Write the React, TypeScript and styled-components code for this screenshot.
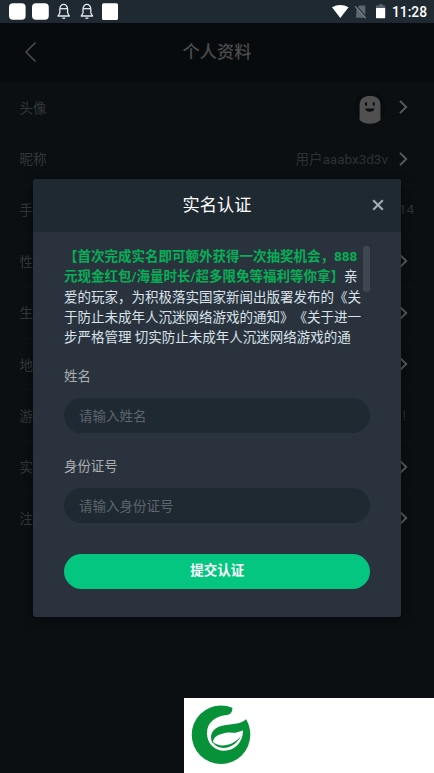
import React from "react";
import styled, { createGlobalStyle } from "styled-components";

const Global = createGlobalStyle`
  * { box-sizing: border-box; }
  body { margin: 0; background: #0b0f12; font-family: Roboto, "Noto Sans CJK SC", sans-serif; text-spacing-trim: space-all; }
  button, input { font-family: inherit; }
`;

const Screen = styled.div`
  position: relative;
  width: 434px;
  height: 773px;
  overflow: hidden;
  background: #0b0f12;
`;

const StatusBar = styled.div`
  height: 23px;
  background: #1f2931;
  display: flex;
  justify-content: space-between;
`;

const StatusIcons = styled.svg`
  display: block;
`;

const StatusRight = styled.div`
  display: flex;
  width: 102px;
`;

const Clock = styled.span`
  color: #fff;
  font-size: 13.8px;
  font-weight: 500;
  line-height: 25px;
  white-space: nowrap;
`;

const NavBar = styled.header`
  display: grid;
  grid-template-columns: 60px 1fr 60px;
  height: 59px;
  align-items: center;
  padding-bottom: 1px;
  background: #070b0d;
`;

const Back = styled.svg`
  margin-left: 24px;
`;

const NavTitle = styled.h1`
  margin: 0;
  padding-bottom: 1px;
  text-align: center;
  font-size: 17.2px;
  line-height: 24px;
  font-weight: 500;
  color: #4c4c4c;
`;

const List = styled.div`
  padding: 0 20px 0 19.5px;
`;

const Row = styled.div`
  height: 51.4px;
  display: flex;
  align-items: center;
  justify-content: space-between;
  border-bottom: 1px solid #0e1215;
  font-size: 13.5px;
  color: #33373a;
  &:last-child { border-bottom-color: transparent; }
`;

const RowLabel = styled.span`
  padding-bottom: 1px;
`;

const RowEnd = styled.div`
  display: flex;
  align-items: center;
`;

const Value = styled.span<{ $gap: number }>`
  margin-right: ${(p) => p.$gap}px;
  padding-bottom: 1px;
  color: #2d3134;
`;

const Arrow = styled.svg`
  margin-right: 6px;
`;

const AvatarIcon = styled.svg`
  margin-right: 11px;
`;

const Dialog = styled.section`
  position: absolute;
  left: 33px;
  top: 179px;
  width: 368px;
  height: 438px;
  border-radius: 3px;
  overflow: hidden;
  background: #2a333d;
  box-shadow: 0 2px 10px rgba(0, 0, 0, 0.45);
`;

const DialogHeader = styled.div`
  height: 53px;
  padding: 0 15px;
  display: grid;
  grid-template-columns: 16px 1fr 16px;
  align-items: center;
  background: #1f2931;
`;

const DialogTitle = styled.h2`
  grid-column: 2;
  margin: 0;
  padding-bottom: 1px;
  text-align: center;
  font-size: 17.2px;
  font-weight: 400;
  line-height: 24px;
  color: #fff;
`;

const CloseIcon = styled.svg`
  margin-bottom: 2px;
`;

const DialogBody = styled.div`
  padding: 14px 31px 0;
`;

const Notice = styled.div`
  display: flex;
  justify-content: space-between;
  height: 102px;
  color: #d9e2ea;
`;

const NoticeText = styled.div`
  font-size: 13.5px;
  line-height: 20.3px;
`;

const Line = styled.div`
  white-space: nowrap;
`;

const Highlight = styled.strong`
  font-weight: 700;
  color: #06ae56;
`;

const ScrollThumb = styled.div`
  width: 7px;
  height: 46px;
  border-radius: 3px;
  background: #3f4851;
`;

const Fields = styled.div`
  padding-top: 17px;
`;

const Field = styled.label`
  display: block;
  height: 90px;
`;

const FieldLabel = styled.span`
  display: block;
  height: 22px;
  margin-bottom: 11px;
  font-size: 13.4px;
  line-height: 24px;
  color: #aaaeb1;
`;

const Input = styled.input`
  display: block;
  width: 306px;
  height: 35px;
  padding: 1px 15px 0;
  border: 0;
  border-radius: 18px;
  outline: 0;
  background: #1f2931;
  font-size: 13.5px;
  &::placeholder { color: #5d656c; opacity: 1; }
`;

const Submit = styled.button`
  display: block;
  width: 306.4px;
  height: 35px;
  margin-top: 8.7px;
  padding: 0 0 4px;
  border: 0;
  border-radius: 18px;
  background: #05c680;
  color: #fff;
  font-size: 13.5px;
  font-weight: 700;
`;

const Watermark = styled.div`
  position: absolute;
  right: 0;
  bottom: 0;
  width: 250px;
  height: 75px;
  background: #fff;
`;

const Chevron = () => (
  <Arrow width="9" height="14" viewBox="0 0 9 14" fill="none" stroke="#5b5b5b" strokeWidth="1.9">
    <path d="M1 .8L7.2 7L1 13.2" />
  </Arrow>
);

const Avatar = () => (
  <AvatarIcon width="36" height="36" viewBox="0 0 36 36">
    <circle cx="18" cy="18" r="17" fill="#090d10" stroke="#0f1315" />
    <path d="M7.6 31.3V16.5C7.6 9.5 11.5 7 18 7s10.4 2.5 10.4 9.5V31.3A17 17 0 0 1 7.6 31.3Z" fill="#505050" />
    <ellipse cx="14" cy="15" rx="1.1" ry="2" fill="#0b0e10" />
    <ellipse cx="21.8" cy="15" rx="1.1" ry="2" fill="#0b0e10" />
    <path d="M13.2 19.4h9.3c-.5 4.4-8.8 4.4-9.3 0Z" fill="#0b0e10" />
  </AvatarIcon>
);

const Bell = ({ x }: { x: number }) => (
  <g transform={`translate(${x} 4)`} fill="none" stroke="#e8edf0" strokeWidth="1.3" strokeLinejoin="round">
    <path d="M2.6 9V5.3C2.6-1.2 10.4-1.2 10.4 5.3V9L12.2 12H.8Z" />
    <path d="M3 4.7h7" />
    <path d="M5 14.2h3" />
  </g>
);

const rows: { label: string; value?: string; avatar?: boolean; arrow: boolean; gap: number }[] = [
  { label: "头像", avatar: true, arrow: true, gap: 0 },
  { label: "昵称", value: "用户aaabx3d3v", arrow: true, gap: 11 },
  { label: "手机", value: "14", arrow: false, gap: 0 },
  { label: "性别", arrow: true, gap: 0 },
  { label: "生日", arrow: true, gap: 0 },
  { label: "地区", arrow: true, gap: 0 },
  { label: "游戏", value: "!", arrow: false, gap: 8 },
  { label: "实名", arrow: true, gap: 0 },
  { label: "注销", arrow: true, gap: 0 },
];

export default function App() {
  return (
    <Screen>
      <Global />
      <StatusBar>
        <StatusIcons width="124" height="23">
          <rect x="9" y="3.2" width="16.6" height="16.6" rx="4" fill="#fff" />
          <rect x="32" y="3.2" width="16.8" height="16.6" rx="4" fill="#fff" />
          <Bell x={57.2} />
          <Bell x={80.4} />
          <rect x="102" y="3.3" width="16" height="16.6" rx="1.5" fill="#fff" />
        </StatusIcons>
        <StatusRight>
          <StatusIcons width="60" height="23">
            <path d="M0 7.2Q8.2 2.6 16.6 7.2L8.3 18Z" fill="#fff" />
            <path d="M24.5 8L27.5 5.4H33.3V17.8H24Z" fill="#5e676d" />
            <path d="M23.8 5.6L34.5 17.2" stroke="#1f2931" strokeWidth="1.2" />
            <path d="M23 6.2L33.8 18.2" stroke="#7a8187" strokeWidth="1.1" />
            <path d="M47 4.3h4v1.2h2.2V9H44V5.5h3Z" fill="#59626a" />
            <rect x="44" y="8" width="9.2" height="10.2" rx=".6" fill="#fff" />
          </StatusIcons>
          <Clock>11:28</Clock>
        </StatusRight>
      </StatusBar>
      <NavBar>
        <Back width="13" height="20" viewBox="0 0 13 20" fill="none" stroke="#4c4c4c" strokeWidth="1.5">
          <path d="M11.5.5L2 10L11.5 19.5" />
        </Back>
        <NavTitle>个人资料</NavTitle>
      </NavBar>
      <List>
        {rows.map((r) => (
          <Row key={r.label}>
            <RowLabel>{r.label}</RowLabel>
            <RowEnd>
              {r.avatar && <Avatar />}
              {r.value && <Value $gap={r.gap}>{r.value}</Value>}
              {r.arrow && <Chevron />}
            </RowEnd>
          </Row>
        ))}
      </List>
      <Dialog>
        <DialogHeader>
          <DialogTitle>实名认证</DialogTitle>
          <CloseIcon width="16" height="16" viewBox="0 0 16 16" stroke="#a3acb4" strokeWidth="2.1">
            <path d="M3.2 3.2L12.8 12.8M12.8 3.2L3.2 12.8" />
          </CloseIcon>
        </DialogHeader>
        <DialogBody>
          <Notice>
            <NoticeText>
              <Line><Highlight>【首次完成实名即可额外获得一次抽奖机会，888</Highlight></Line>
              <Line><Highlight>元现金红包/海量时长/超多限免等福利等你拿】</Highlight>亲</Line>
              <Line>爱的玩家，为积极落实国家新闻出版署发布的《关</Line>
              <Line>于防止未成年人沉迷网络游戏的通知》《关于进一</Line>
              <Line>步严格管理 切实防止未成年人沉迷网络游戏的通</Line>
            </NoticeText>
            <ScrollThumb />
          </Notice>
          <Fields>
            <Field>
              <FieldLabel>姓名</FieldLabel>
              <Input placeholder="请输入姓名" />
            </Field>
            <Field>
              <FieldLabel>身份证号</FieldLabel>
              <Input placeholder="请输入身份证号" />
            </Field>
            <Submit>提交认证</Submit>
          </Fields>
        </DialogBody>
      </Dialog>
      <Watermark>
        <svg width="75" height="75" viewBox="0 0 75 75">
          <path d="M48.3 10C44 8 41 7.4 37 7.4A29.3 29.3 0 1 0 66.3 36.7C66.3 31 64.8 25.5 62 21.3L52 34L40 17.3C43.5 17 47 17 48.3 10Z" fill="#079239" />
          <path d="M42 17C31 18.5 23 24.5 23 35C23 46 31 52.7 40 52.7C51 52.7 59 44 59 32.5L62 21.3L50 10Z" fill="#fff" />
          <path d="M48.3 10C48.6 15 45.5 17.3 40.5 17.3L36 14L40 8Z" fill="#079239" />
          <path d="M62 21.3C57 27 46 25.5 37 28C29 30.5 26.8 35.5 27 40C27.2 42 27.8 44 29 45.5L34 40L59 32.5L64 29Z" fill="#079239" />
          <path d="M59 32.5C55 37 49 33.5 41 35C33 36.500 29.500 39.500 29 44C35 51.500 49 50.300 57 38.500Z" fill="#fff" />
          <path d="M28 43C34 50 48 49 57 38C49 53 33 53 28 43Z" fill="#079239" />
        </svg>
      </Watermark>
    </Screen>
  );
}
